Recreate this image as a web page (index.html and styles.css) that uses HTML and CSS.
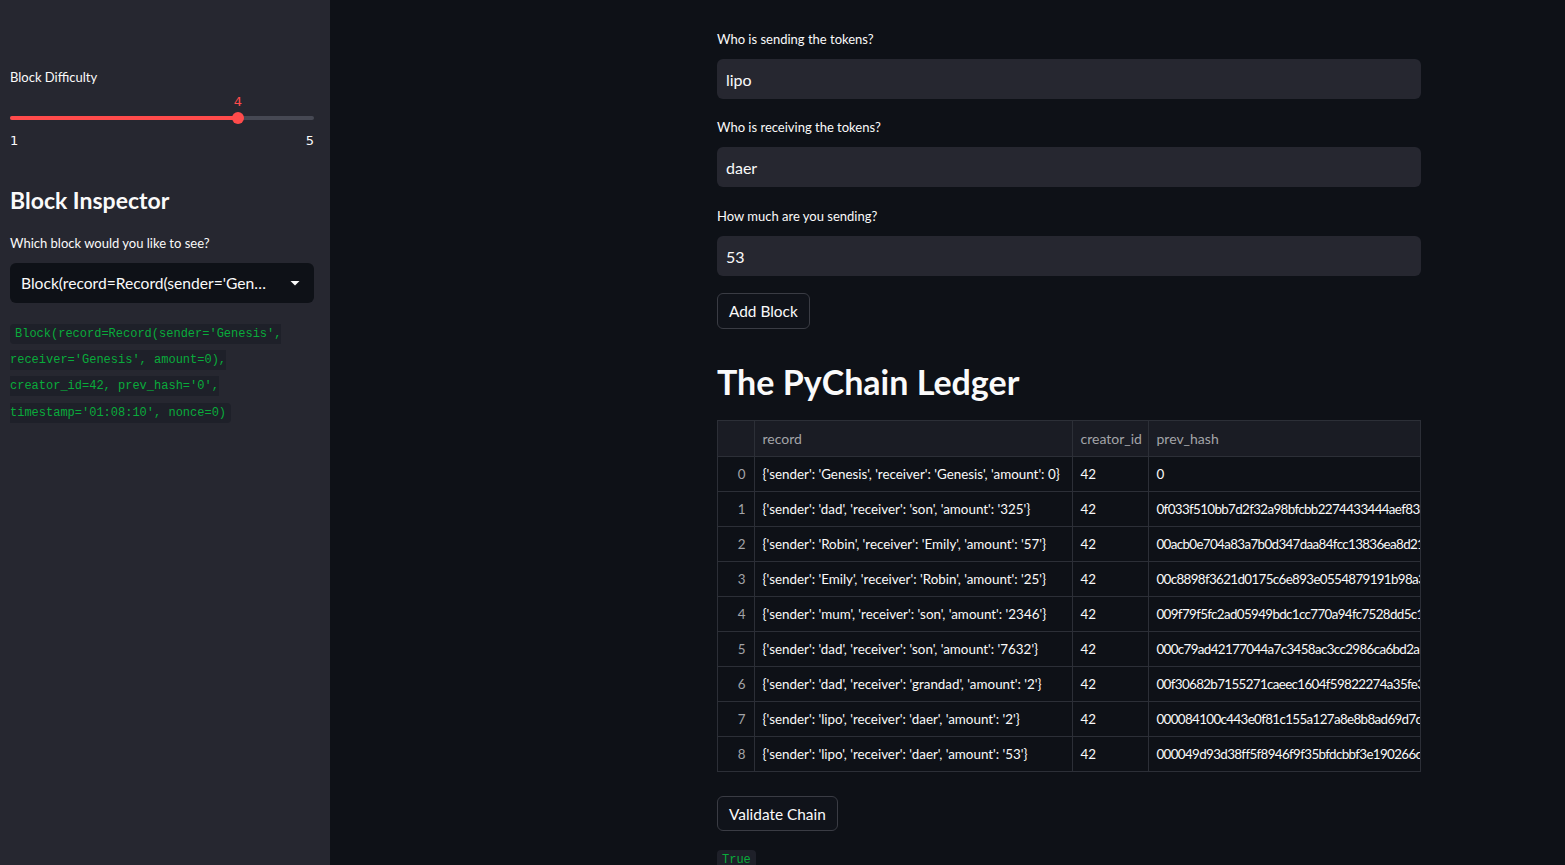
FILE: index.html
```html
<!DOCTYPE html>
<html>
<head>
<meta charset="utf-8">
<link rel="stylesheet" href="styles.css">
</head>
<body>
<div class="app">
  <aside class="sidebar">
    <div class="widget-label lbl-difficulty">Block Difficulty</div>
    <div class="slider">
      <div class="slider-track">
        <div class="slider-fill" style="width:75%"></div>
        <div class="slider-thumb" style="left:75%">
          <span class="slider-value">4</span>
        </div>
      </div>
      <div class="slider-ticks"><span>1</span><span>5</span></div>
    </div>
    <h2 class="side-title">Block Inspector</h2>
    <div class="widget-label">Which block would you like to see?</div>
    <div class="select">
      <span class="select-text">Block(record=Record(sender='Gen…</span>
      <svg class="caret" width="12" height="12" viewBox="0 0 12 12"><path d="M1.5 4h9L6 8.5z" fill="#fafafa"/></svg>
    </div>
    <p class="code-para"><code class="inline-code">Block(record=Record(sender='Genesis', receiver='Genesis', amount=0), creator_id=42, prev_hash='0', timestamp='01:08:10', nonce=0)</code></p>
  </aside>
  <main class="main">
    <div class="block">
      <div class="field">
        <div class="widget-label">Who is sending the tokens?</div>
        <div class="input">lipo</div>
      </div>
      <div class="field">
        <div class="widget-label">Who is receiving the tokens?</div>
        <div class="input">daer</div>
      </div>
      <div class="field">
        <div class="widget-label">How much are you sending?</div>
        <div class="input">53</div>
      </div>
      <button class="btn btn-add">Add Block</button>
      <h1 class="ledger-title">The PyChain Ledger</h1>
      <div class="table-wrap">
        <table class="df">
          <thead>
            <tr><th class="idx"></th><th class="c-record">record</th><th class="c-creator">creator_id</th><th class="c-hash">prev_hash</th></tr>
          </thead>
          <tbody>
            <tr><td class="idx">0</td><td>{'sender': 'Genesis', 'receiver': 'Genesis', 'amount': 0}</td><td>42</td><td class="hash">0</td></tr>
            <tr><td class="idx">1</td><td>{'sender': 'dad', 'receiver': 'son', 'amount': '325'}</td><td>42</td><td class="hash">0f033f510bb7d2f32a98bfcbb2274433444aef83a1</td></tr>
            <tr><td class="idx">2</td><td>{'sender': 'Robin', 'receiver': 'Emily', 'amount': '57'}</td><td>42</td><td class="hash">00acb0e704a83a7b0d347daa84fcc13836ea8d21</td></tr>
            <tr><td class="idx">3</td><td>{'sender': 'Emily', 'receiver': 'Robin', 'amount': '25'}</td><td>42</td><td class="hash">00c8898f3621d0175c6e893e0554879191b98a3c</td></tr>
            <tr><td class="idx">4</td><td>{'sender': 'mum', 'receiver': 'son', 'amount': '2346'}</td><td>42</td><td class="hash">009f79f5fc2ad05949bdc1cc770a94fc7528dd5c1</td></tr>
            <tr><td class="idx">5</td><td>{'sender': 'dad', 'receiver': 'son', 'amount': '7632'}</td><td>42</td><td class="hash">000c79ad42177044a7c3458ac3cc2986ca6bd2a1</td></tr>
            <tr><td class="idx">6</td><td>{'sender': 'dad', 'receiver': 'grandad', 'amount': '2'}</td><td>42</td><td class="hash">00f30682b7155271caeec1604f59822274a35fe31</td></tr>
            <tr><td class="idx">7</td><td>{'sender': 'lipo', 'receiver': 'daer', 'amount': '2'}</td><td>42</td><td class="hash">000084100c443e0f81c155a127a8e8b8ad69d7c1</td></tr>
            <tr><td class="idx">8</td><td>{'sender': 'lipo', 'receiver': 'daer', 'amount': '53'}</td><td>42</td><td class="hash">000049d93d38ff5f8946f9f35bfdcbbf3e190266c</td></tr>
          </tbody>
        </table>
      </div>
      <button class="btn btn-validate">Validate Chain</button>
      <p class="result"><code class="inline-code">True</code></p>
    </div>
  </main>
</div>
</body>
</html>
```
FILE: styles.css
```css
* { box-sizing: border-box; }
html, body {
  margin: 0;
  padding: 0;
  height: 100%;
  overflow: hidden;
  background: #0e1117;
  color: #fafafa;
  font-family: Lato, "Noto Sans", sans-serif;
}
.app {
  display: flex;
  height: 865px;
}
.sidebar {
  width: 330px;
  flex: none;
  background: #262730;
  padding: 67px 16px 0 10px;
  display: flex;
  flex-direction: column;
}
.widget-label {
  font-size: 13px;
  line-height: 21px;
  height: 21px;
}
.slider {
  margin-top: 28px;
}
.slider-track {
  position: relative;
  height: 4px;
  border-radius: 2px;
  background: #464853;
}
.slider-fill {
  height: 4px;
  border-radius: 2px;
  background: #ff4b4b;
}
.slider-thumb {
  position: absolute;
  top: -4px;
  width: 12px;
  height: 12px;
  margin-left: -6px;
  border-radius: 50%;
  background: #ff4b4b;
}
.slider-value {
  position: absolute;
  bottom: 14px;
  left: 50%;
  transform: translateX(-50%);
  color: #ff4b4b;
  line-height: 16px;
  font-family: "DejaVu Sans", sans-serif;
  font-size: 13px;
}
.slider-ticks {
  display: flex;
  justify-content: space-between;
  margin-top: 12px;
  line-height: 18px;
  font-family: "DejaVu Sans", sans-serif;
  font-size: 13px;
}
.side-title {
  margin: 34px 0 0;
  font-size: 23px;
  font-weight: 700;
  line-height: 32px;
}
.side-title + .widget-label {
  margin-top: 17px;
}
.select {
  margin-top: 9px;
  height: 40px;
  border-radius: 6px;
  background: #0e1117;
  display: flex;
  align-items: center;
  justify-content: space-between;
  padding: 0 13px 0 11px;
  font-size: 15.6px;
}
.select-text {
  white-space: nowrap;
}
.caret { flex: none; }
.code-para {
  margin: 15px 0 0;
  font-size: 16px;
  line-height: 1.6;
}
.inline-code {
  font-family: "Liberation Mono", "DejaVu Sans Mono", monospace;
  font-size: 12px;
  color: #09ab3b;
  background: #1e2029;
  padding: 3px 5px;
  border-radius: 4px;
  box-decoration-break: slice;
  -webkit-box-decoration-break: slice;
}
.main {
  flex: 1;
  padding: 29px 0 0 387px;
}
.block {
  width: 704px;
  display: flex;
  flex-direction: column;
  align-items: flex-start;
}
.field {
  width: 100%;
  margin-bottom: 18px;
}
.field:nth-child(2) { margin-bottom: 19px; }
.field .widget-label { margin-bottom: 9px; }
.input {
  height: 40px;
  border-radius: 6px;
  background: #262730;
  padding: 0 9px;
  display: flex;
  align-items: center;
  font-size: 16px;
}
.btn {
  font-family: inherit;
  font-size: 15.4px;
  color: #fafafa;
  background: #10131a;
  border: 1px solid #3a3c44;
  border-radius: 6px;
  height: 36px;
  padding: 0 11px;
  cursor: pointer;
}
.btn-add {
  margin-top: -1px;
}
.ledger-title {
  margin: 31px 0 0;
  font-size: 34px;
  font-weight: 700;
  line-height: 44px;
}
.table-wrap {
  margin-top: 16px;
  width: 704px;
  overflow: hidden;
  border: 1px solid #2c2f37;
}
.df {
  border-collapse: collapse;
  table-layout: fixed;
  width: 900px;
  font-size: 13.4px;
}
.df th, .df td {
  height: 35px;
  padding: 0 8px;
  border: 1px solid #2c2f37;
  white-space: nowrap;
  overflow: hidden;
  text-align: left;
  font-weight: 400;
}
.df tr:first-child th { border-top: none; }
.df th:first-child, .df td:first-child { border-left: none; }
.df tbody tr:last-child td { border-bottom: none; }
.df th {
  background: #1a1c24;
  color: #a3a4a8;
  font-size: 14px;
}
.df .idx {
  width: 36px;
  text-align: right;
  color: #a3a4a8;
}
.df .hash {
  letter-spacing: -0.65px;
}
.df .c-record { width: 318px; }
.df .c-creator { width: 76px; }
.df .c-hash { width: 470px; }
.btn-validate {
  margin-top: 24px;
  height: 35px;
}
.result {
  margin: 13px 0 0;
  font-size: 16px;
  line-height: 1.6;
}
```
